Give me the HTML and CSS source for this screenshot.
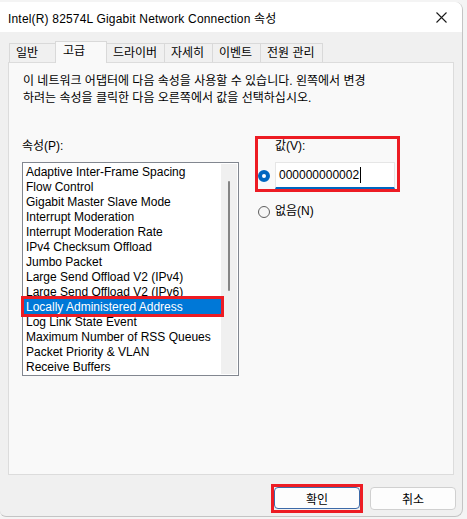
FILE: index.html
```html
<!DOCTYPE html>
<html lang="ko">
<head>
<meta charset="utf-8">
<title>Intel(R) 82574L Gigabit Network Connection 속성</title>
<link rel="stylesheet" href="styles.css">
</head>
<body>
<div class="window">
  <div class="titlebar">
    <span class="title">Intel(R) 82574L Gigabit Network Connection 속성</span>
    <svg class="close" width="11" height="11" viewBox="0 0 11 11"><path d="M0.5 0.5 L10.5 10.5 M10.5 0.5 L0.5 10.5" stroke="#1a1a1a" stroke-width="1.1" fill="none"/></svg>
  </div>
  <div class="body">
    <div class="tabs">
      <div class="tab w1">일반</div>
      <div class="tab active w2">고급</div>
      <div class="tab w3">드라이버</div>
      <div class="tab w4">자세히</div>
      <div class="tab w5">이벤트</div>
      <div class="tab w6">전원 관리</div>
    </div>
    <div class="panel">
      <p class="desc">이 네트워크 어댑터에 다음 속성을 사용할 수 있습니다. 왼쪽에서 변경<br>하려는 속성을 클릭한 다음 오른쪽에서 값을 선택하십시오.</p>
      <div class="main">
        <div class="left">
          <div class="label">속성(P):</div>
          <div class="listbox">
            <ul class="rows">
              <li>Adaptive Inter-Frame Spacing</li>
              <li>Flow Control</li>
              <li>Gigabit Master Slave Mode</li>
              <li>Interrupt Moderation</li>
              <li>Interrupt Moderation Rate</li>
              <li>IPv4 Checksum Offload</li>
              <li>Jumbo Packet</li>
              <li>Large Send Offload V2 (IPv4)</li>
              <li>Large Send Offload V2 (IPv6)</li>
              <li class="selected">Locally Administered Address</li>
              <li>Log Link State Event</li>
              <li>Maximum Number of RSS Queues</li>
              <li>Packet Priority &amp; VLAN</li>
              <li>Receive Buffers</li>
            </ul>
            <div class="scrollbar"><div class="thumb"></div></div>
          </div>
        </div>
        <div class="right">
          <div class="valuebox">
            <div class="vlabel">값(V):</div>
            <div class="vrow">
              <span class="radio checked"></span>
              <div class="textbox">000000000002<span class="caret"></span></div>
            </div>
          </div>
          <div class="none-row">
            <span class="radio"></span>
            <span class="none-label">없음(N)</span>
          </div>
        </div>
      </div>
    </div>
    <div class="buttons">
      <span class="mark"><button class="btn ok">확인</button></span>
      <button class="btn">취소</button>
    </div>
  </div>
</div>
</body>
</html>
```
FILE: styles.css
```css
html, body {
  margin: 0;
  padding: 0;
}
body {
  background: #f4f4f4;
  font-family: "Liberation Sans", "Noto Sans CJK KR", sans-serif;
  font-size: 12px;
  color: #000;
  width: 467px;
  height: 519px;
  overflow: hidden;
}
.window {
  margin-top: 2px;
  width: 463px;
  height: 515px;
  box-sizing: border-box;
  border-right: 1px solid #c4c4c4;
  border-bottom: 1px solid #c4c4c4;
  border-radius: 0 8px 8px 6px;
  overflow: hidden;
  background: #f0f0f0;
}
.titlebar {
  height: 30px;
  background: #ffffff;
  display: flex;
  align-items: center;
  padding-left: 8px;
  padding-right: 15px;
}
.title {
  flex: 1;
  font-size: 12px;
  letter-spacing: 0.18px;
  color: #000;
  white-space: nowrap;
}
.close {
  display: block;
}
.body {
  padding-top: 9px;
}
.tabs {
  display: flex;
  align-items: flex-end;
  height: 21px;
  margin-left: 9px;
}
.tab {
  box-sizing: border-box;
  height: 19px;
  line-height: 18px;
  border: 1px solid #d9d9d9;
  border-bottom: none;
  background: #f0f0f0;
  padding-left: 6px;
  white-space: nowrap;
  margin-left: -1px;
}
.tab.w1 { width: 47px; margin-left: 0; }
.tab.w2 { width: 52px; }
.tab.w3 { width: 59px; }
.tab.w4 { width: 49px; }
.tab.w5 { width: 49px; }
.tab.w6 { width: 63px; }
.tab.active {
  height: 22px;
  margin-bottom: -1px;
  background: #f9f9f9;
  padding-left: 7px;
  padding-bottom: 3px;
  position: relative;
  z-index: 1;
}
.panel {
  box-sizing: border-box;
  margin-left: 8px;
  width: 446px;
  height: 413px;
  border: 1px solid #dcdcdc;
  background: #f9f9f9;
  padding: 10px 0 0 13px;
}
.desc {
  margin: 0 0 0 1px;
  line-height: 17px;
  white-space: nowrap;
}
.main {
  display: flex;
  align-items: flex-start;
  margin-top: 29px;
  gap: 16px;
}
.left {
  width: 217px;
}
.label {
  margin-top: 3px;
  line-height: 15px;
}
.listbox {
  margin-top: 8px;
  box-sizing: border-box;
  width: 217px;
  height: 214px;
  border: 1px solid #828790;
  background: #fff;
  padding: 1px;
  display: flex;
}
.rows {
  list-style: none;
  margin: 0;
  padding: 0;
  flex: 1;
}
.rows li {
  box-sizing: border-box;
  height: 15px;
  line-height: 15px;
  padding: 1px 0 0 2px;
  white-space: nowrap;
}
.rows li.selected {
  background: #0078d7;
  color: #fff;
  outline: 3px solid #ed1c24;
  outline-offset: 0;
  position: relative;
  z-index: 1;
}
.scrollbar {
  width: 16px;
  background: #f0f0f0;
  padding-top: 17px;
  box-sizing: border-box;
}
.thumb {
  width: 2px;
  height: 110px;
  margin: 0 auto;
  background: #858585;
  border-radius: 1px;
}
.right {
  width: 145px;
}
.valuebox {
  box-sizing: border-box;
  width: 145px;
  height: 56px;
  border: 3px solid #ed1c24;
  padding-right: 2px;
}
.vlabel {
  line-height: 15px;
  margin-left: 17px;
}
.vrow {
  display: flex;
  align-items: center;
  margin-top: 8px;
  gap: 5px;
}
.radio {
  box-sizing: border-box;
  width: 12px;
  height: 12px;
  border-radius: 50%;
  border: 1px solid #5f5f5f;
  background: #f6f6f6;
  flex: none;
}
.radio.checked {
  border: 4px solid #0067c0;
  background: #fff;
}
.textbox {
  box-sizing: border-box;
  width: 120px;
  height: 27px;
  background: #fff;
  border: 1px solid #e6e6e6;
  border-bottom: 2px solid #0067c0;
  padding-left: 3px;
  line-height: 24px;
  display: flex;
  align-items: center;
}
.caret {
  display: inline-block;
  width: 1px;
  height: 16px;
  background: #000;
  margin-left: 1px;
}
.none-row {
  display: flex;
  align-items: center;
  gap: 5px;
  margin-top: 12px;
  margin-left: 3px;
}
.none-label {
  line-height: 15px;
}
.buttons {
  display: flex;
  justify-content: flex-end;
  align-items: flex-start;
  gap: 7px;
  margin-top: 9px;
  padding-right: 6px;
}
.mark {
  display: block;
  border: 3px solid #ed1c24;
  padding: 0 0 1px 0;
}
.mark .btn {
  display: block;
}
.btn {
  box-sizing: border-box;
  width: 86px;
  height: 23px;
  margin-top: 3px;
  font-family: "Liberation Sans", "Noto Sans CJK KR", sans-serif;
  font-size: 12px;
  color: #000;
  background: #fdfdfd;
  border: 1px solid #d0d0d0;
  border-radius: 4px;
  padding: 0;
}
.btn.ok {
  width: 86px;
  height: 22px;
  margin-top: 0;
  border-color: #3d6aa8;
}
```
